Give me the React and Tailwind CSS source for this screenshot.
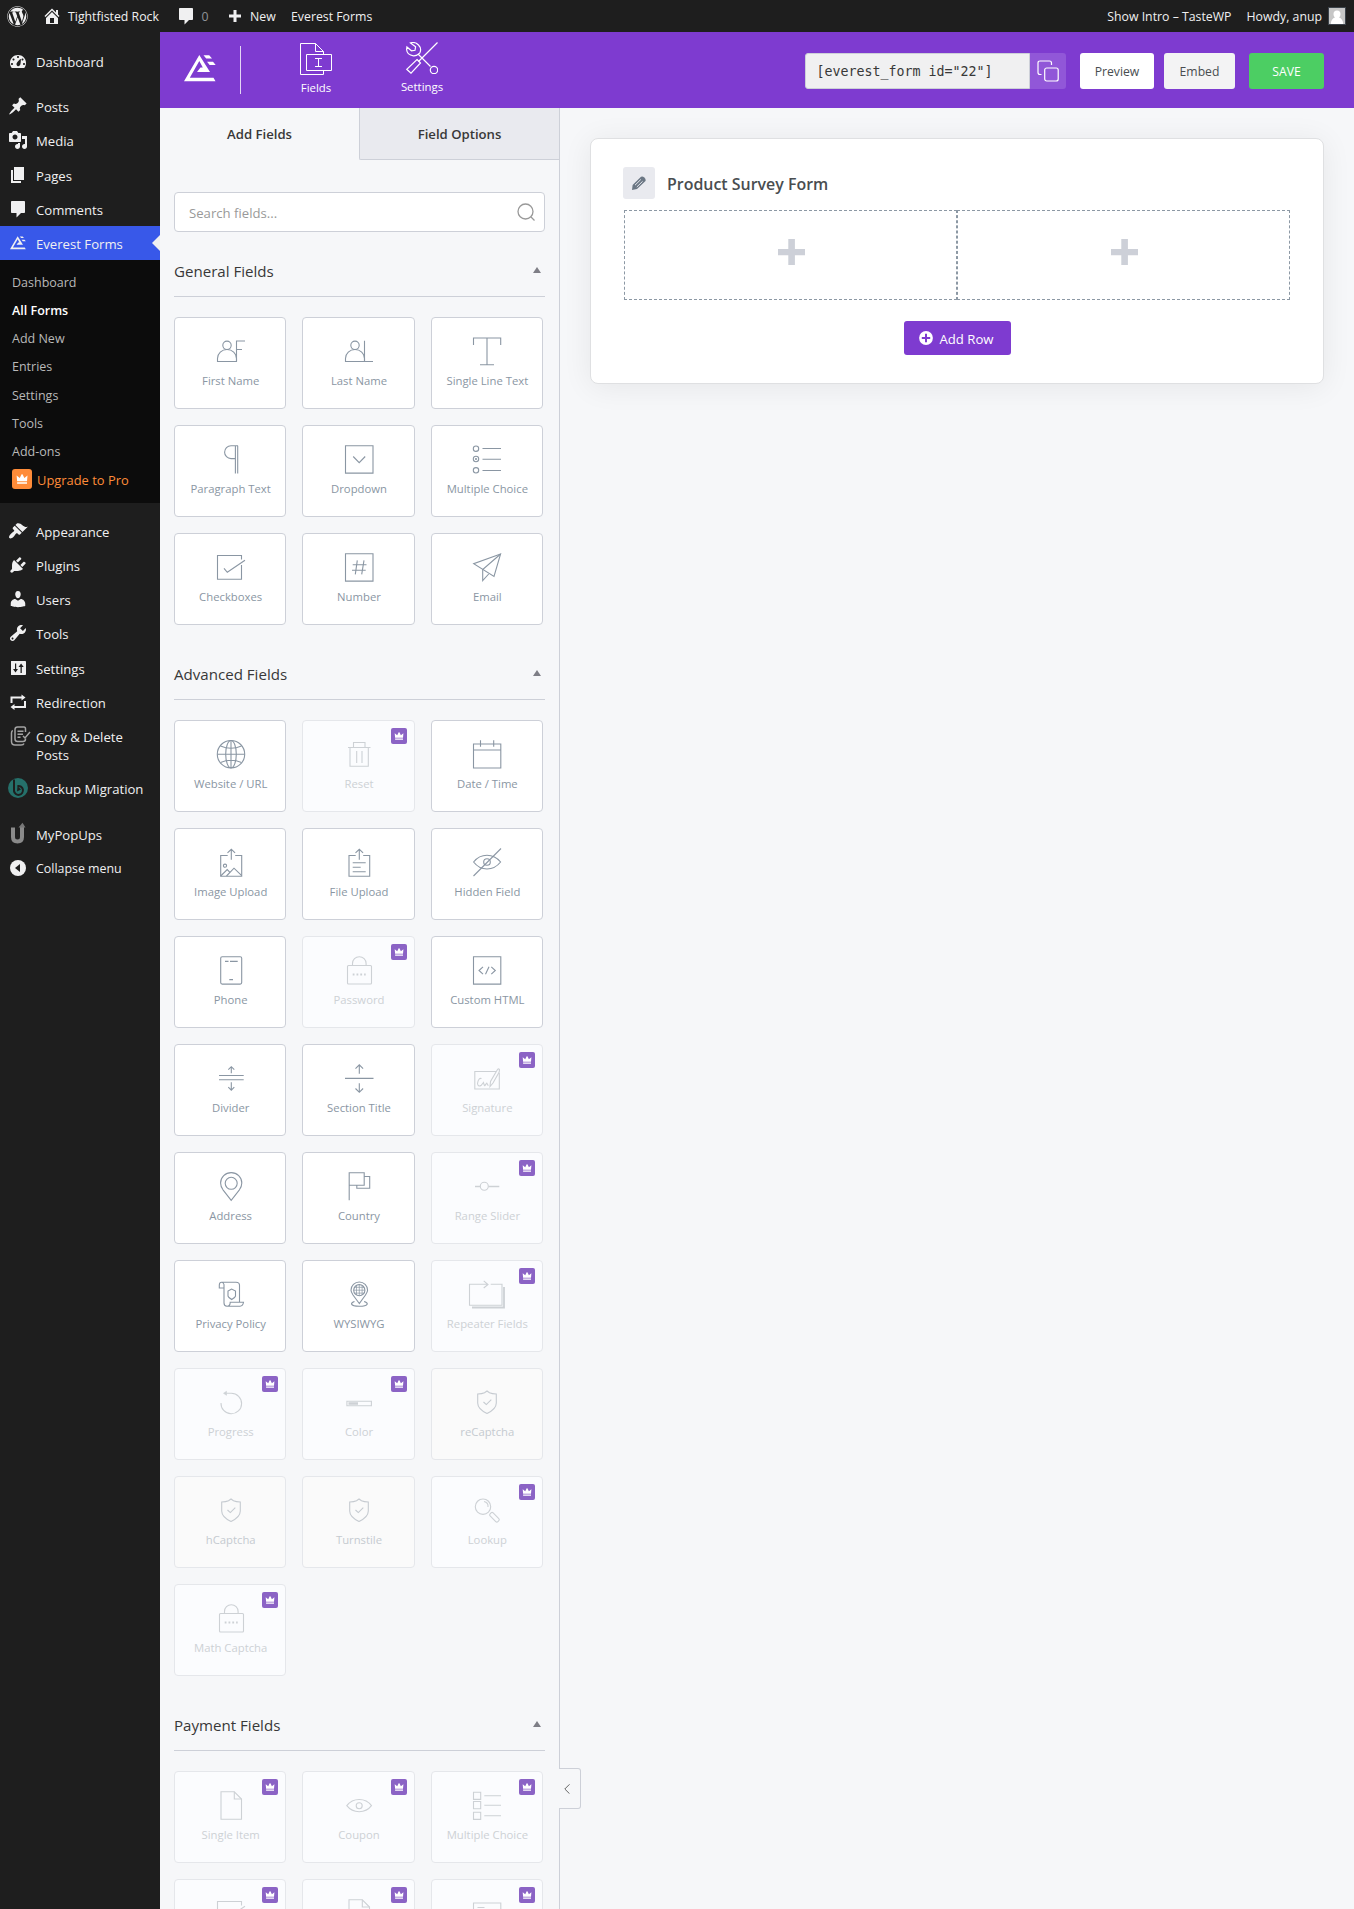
import React from "react";
import { FaWordpress } from "react-icons/fa";

/* ---------- WordPress menu glyphs (20 x 20) ---------- */

const GLYPHS = {
  dashboard:
    "M3.76 17h12.48c1.34-1.63 1.76-3.31 1.76-5.06 0-4.42-3.58-7.94-8-7.94s-8 3.52-8 7.94c0 1.75.42 3.43 1.76 5.06zM9 6c0-.55.45-1 1-1s1 .45 1 1-.45 1-1 1-1-.45-1-1zM4.5 8.5c0-.55.45-1 1-1s1 .45 1 1-.45 1-1 1-1-.45-1-1zM12.300 8l.6 .3c-.1 1.900-.2 4.600-.8 5.800-.6 1-1.700 1.300-2.700.8-1-.6-1.200-1.800-.6-2.800.7-1.200 2.200-2.900 3.500-4.100zM13.500 8.500c0-.55.45-1 1-1s1 .45 1 1-.45 1-1 1-1-.45-1-1zM3 13c0-.55.45-1 1-1s1 .45 1 1-.45 1-1 1-1-.45-1-1zm12 0c0-.55.45-1 1-1s1 .45 1 1-.45 1-1 1-1-.45-1-1z",
  post: "M10.44 3.02l1.82-1.82 6.36 6.35-1.83 1.82c-1.05-.68-2.48-.57-3.41.36l-.75.75c-.92.93-1.04 2.35-.35 3.41l-1.83 1.82-2.41-2.41-2.8 2.79c-.42.42-3.38 2.71-3.8 2.29s1.86-3.39 2.28-3.81l2.79-2.79L4.1 9.36l1.83-1.82c1.05.69 2.48.57 3.4-.36l.75-.75c.93-.92 1.05-2.35.36-3.41z",
  media:
    "M13 11V4c0-.55-.45-1-1-1h-1.67L9 1H5L3.67 3H2c-.55 0-1 .45-1 1v7c0 .55.45 1 1 1h10c.55 0 1-.45 1-1zM7 4.5c1.38 0 2.5 1.12 2.5 2.5S8.38 9.5 7 9.5 4.5 8.38 4.5 7 5.62 4.5 7 4.5zM14 6h5v10.5c0 1.38-1.12 2.5-2.5 2.5S14 17.88 14 16.5s1.12-2.5 2.5-2.5c.17 0 .34.02.5.05V9h-3V6zm-4 8.05V13h2v3.5c0 1.38-1.12 2.5-2.5 2.5S7 17.88 7 16.5 8.12 14 9.5 14c.17 0 .34.02.5.05z",
  page: "M6 15V2h10v13H6zm-1 1h8v2H3V5h2v11z",
  comments:
    "M4 2h12c.55 0 1 .45 1 1v10c0 .55-.45 1-1 1h-3l-4.500 4.500V14H4c-.55 0-1-.45-1-1V3c0-.55.45-1 1-1z",
  appearance:
    "M14.48 11.06L7.41 3.99l1.5-1.5c.5-.56 2.3-.47 3.51.32 1.21.8 1.43 1.28 2.91 2.1 1.18.64 2.45 1.26 4.45.85zm-.71.71L6.7 4.7 4.93 6.47c-.39.39-.39 1.02 0 1.41l1.06 1.06c.39.39.39 1.03 0 1.42-.6.6-1.43 1.11-2.21 1.69-.35.26-.7.53-1.01.84C1.43 14.23.4 16.08 1.4 17.07c.99 1 2.84-.03 4.18-1.36.31-.31.58-.66.85-1.02.57-.78 1.08-1.61 1.69-2.21.39-.39 1.02-.39 1.41 0l1.06 1.06c.39.39 1.02.39 1.41 0z",
  plugins:
    "M13.11 4.36L9.87 7.6 8 5.73l3.24-3.24c.35-.34 1.05-.2 1.56.32.52.51.66 1.21.31 1.55zm-8 1.77l.91-1.12 9.01 9.01-1.19.84c-.71.71-2.63 1.16-3.82 1.16H6.14L4.9 17.26c-.59.59-1.54.59-2.12 0-.59-.58-.59-1.53 0-2.12l1.24-1.24v-3.88c0-1.13.4-3.19 1.09-3.89zm7.26 3.97l3.24-3.24c.34-.35 1.04-.21 1.55.31.52.51.66 1.21.31 1.55l-3.24 3.25z",
  users:
    "M10 9.25c-2.27 0-2.73-3.44-2.73-3.44C7 4.02 7.82 2 9.97 2c2.16 0 2.98 2.02 2.71 3.81 0 0-.41 3.44-2.68 3.44zm0 2.57L12.72 10c2.39 0 4.52 2.33 4.52 4.53v2.49s-3.65 1.13-7.24 1.13c-3.65 0-7.24-1.13-7.24-1.13v-2.49c0-2.25 1.94-4.48 4.47-4.48z",
  tools:
    "M16.68 9.77c-1.34 1.34-3.3 1.67-4.95.99l-5.41 6.52c-.99.99-2.59.99-3.58 0s-.99-2.59 0-3.57l6.52-5.42c-.68-1.65-.35-3.61.99-4.95 1.28-1.28 3.12-1.62 4.72-1.06l-2.89 2.89 2.82 2.82 2.86-2.87c.53 1.58.18 3.39-1.08 4.65zM3.81 16.21c.4.39 1.04.39 1.43 0 .4-.4.4-1.04 0-1.43-.39-.4-1.03-.4-1.43 0-.39.39-.39 1.03 0 1.43z",
  settings:
    "M18 16V4c0-.55-.45-1-1-1H3.500c-.55 0-.5.45-.5 1v12c0 .55-.05 1 .5 1h13.500c.55 0 1-.45 1-1zM8.200 11h1.800l-2.500 3.500L5 11h2V5.500h1.200V11zm5.600-2v6h-1.300V9h-2l2.600-3.500L15.700 9z",
  home: "M16 8.5l1.53 1.53-1.06 1.06L10 4.6l-6.47 6.5-1.06-1.07L10 2.47l4 3.99V4h2v4.500zm-6-2.46l6 5.99V18H4v-5.97zM12 17v-5H8v5h4z",
};

function Glyph({ name, className }) {
  return (
    <svg viewBox="0 0 20 20" className={className} fill="currentColor" fillRule="evenodd">
      <path d={GLYPHS[name]} />
    </svg>
  );
}

function EverestMark({ className }) {
  return (
    <svg viewBox="0 0 32 27" className={className} fill="currentColor">
      <path d="M15.300 0L26 17H13l3.500-4.600h2.300L15.300 6 5.800 22.700h23.700l2 3.500H0z" />
      <path d="M19.500.3h5.700L28 3.500h-5.800zM23 6.800h6l2.700 3.200h-6z" />
    </svg>
  );
}

function RedirectIcon() {
  return (
    <svg viewBox="0 0 20 20" className="size-5" fill="none" stroke="currentColor" strokeWidth="2">
      <path d="M3.500 11V5.500H14M17 9v6H6" />
      <path d="M13.500 2.500l4 3-4 3zM6.500 12l-4 3 4 3z" fill="currentColor" stroke="none" />
    </svg>
  );
}

function CopyDeleteIcon() {
  return (
    <svg viewBox="0 0 22 20" className="ml-[6px] h-5 w-[22px] shrink-0" fill="none" stroke="#a3a3a3" strokeWidth="1.500">
      <path d="M15.500 12.500V13q0 2.500-2.500 2.500H7.500Q5 15.500 5 13V3.500Q5 1 7.500 1H14q1.500 0 1.500 2v3" />
      <path d="M2.800 4.500Q1.500 5 1.500 7v8.500Q1.500 19 5 19h6q2.500 0 3-1.500M7.500 5.200h6M7.500 8.200h5.500M7.500 11.200h3M13 10l2 2 5-6" />
    </svg>
  );
}

function BackupIcon() {
  return (
    <svg viewBox="0 0 20 20" className="size-5">
      <circle cx="10" cy="10" r="10" fill="#25706a" />
      <path d="M6 1.500v11.500a4.500 4.500 0 1 0 3.500-5" fill="none" stroke="#1e1e1e" strokeWidth="2" />
      <path d="M9.500 8L9 13.500l4-2z" fill="#1e1e1e" />
    </svg>
  );
}

function PopUpsIcon() {
  return (
    <svg viewBox="0 0 20 20" className="size-5 overflow-visible" fill="none" stroke="#8a8a8a" strokeWidth="4">
      <path d="M5 3.500v9.500q0 4.500 4.500 4.500t4.500-4.500V3" />
      <path d="M10.500 3.500L14.500-1.200 17.500 3.500z" fill="#777" stroke="none" />
    </svg>
  );
}

function CollapseIcon() {
  return (
    <svg viewBox="0 0 20 20" className="size-5">
      <circle cx="10" cy="10" r="8" fill="#f0f0f1" />
      <path d="M12 6v8L7 10z" fill="#1e1e1e" />
    </svg>
  );
}

function Crown({ className }) {
  return (
    <svg viewBox="0 0 16 16" className={className} fill="#fff">
      <path d="M3.700 5.200l2.500 2 1.500-3h.7l1.500 3 2.500-2-.4 4.600H4.100zM4.100 10.500h7.900v1.200H4.100z" />
    </svg>
  );
}

/* ---------- Admin bar ---------- */

function AdminBar() {
  return (
    <header className="flex h-8 shrink-0 items-center bg-[#1e1e1e] text-[12.300px] text-[#f0f0f1]">
      <FaWordpress className="ml-[6.500px] size-[21px] shrink-0" />
      <Glyph name="home" className="ml-[14.500px] size-5 shrink-0" />
      <span className="mt-[3px] ml-[6px] w-[94px] whitespace-nowrap">Tightfisted Rock</span>
      <Glyph name="comments" className="ml-[13.500px] size-5 shrink-0" />
      <span className="mt-[3px] ml-[6px] w-[10px] text-[#8f9297]">0</span>
      <svg viewBox="0 0 14 14" className="ml-[16px] size-[14px] shrink-0" fill="currentColor">
        <path d="M5.500 1h3v4.500H13v3H8.500V13h-3V8.500H1v-3h4.500z" />
      </svg>
      <span className="mt-[3px] ml-[8.500px] w-[27px]">New</span>
      <span className="mt-[3px] ml-[14px] whitespace-nowrap">Everest Forms</span>
      <span className="mt-[3px] ml-auto whitespace-nowrap">Show Intro – TasteWP</span>
      <span className="mt-[3px] ml-[15px] whitespace-nowrap">Howdy, anup</span>
      <svg viewBox="0 0 18 18" className="mr-2 ml-[6px] size-[18px] shrink-0">
        <path d="M0 0h18v18H0z" fill="#3c434a" />
        <path d="M1 1h16v16H1z" fill="#c6c6c6" />
        <path d="M9 3.500a3.500 3.500 0 0 1 3.500 3.500c0 1.800-.8 3-1.500 3.500 2.500.8 4 3 4.200 6.500H2.800c.2-3.500 1.700-5.700 4.200-6.500C6.300 10 5.500 8.800 5.500 7A3.500 3.500 0 0 1 9 3.500z" fill="#fff" />
      </svg>
    </header>
  );
}

/* ---------- Sidebar ---------- */

function MenuItem({ icon, children, active, small }) {
  return (
    <div className={`relative flex ${active ? "bg-[#3858e9]" : ""}`}>
      <div className="flex w-9 shrink-0 justify-center pt-[7px]">{icon}</div>
      <div className={`pt-[9px] pb-[7px] leading-[18.200px] whitespace-nowrap ${small ? "text-[12.400px]" : ""}`}>
        {children}
      </div>
      {active && (
        <div className="absolute top-[9px] right-0 border-y-8 border-r-8 border-y-transparent border-r-[#f0f0f1]" />
      )}
    </div>
  );
}

const glyph = (name) => <Glyph name={name} className="size-5" />;
const SUBMENU = ["Dashboard", "All Forms", "Add New", "Entries", "Settings", "Tools", "Add-ons"];

function Sidebar() {
  return (
    <nav className="w-40 shrink-0 bg-[#1e1e1e] pt-3 text-[13.150px] text-[#f0f0f1]">
      <MenuItem icon={glyph("dashboard")}>Dashboard</MenuItem>
      <div className="h-[11px]" />
      <MenuItem icon={glyph("post")}>Posts</MenuItem>
      <MenuItem icon={glyph("media")}>Media</MenuItem>
      <MenuItem icon={glyph("page")}>Pages</MenuItem>
      <MenuItem icon={glyph("comments")}>Comments</MenuItem>
      <MenuItem active icon={<EverestMark className="mt-[3px] h-[14px] w-4" />}>
        Everest Forms
      </MenuItem>
      <div className="bg-[#0c0c0c] pt-[8.500px] pb-[8.500px] pl-3 text-[12.500px] text-[#b9b9b9]">
        {SUBMENU.map((t) => (
          <div key={t} className={`leading-[28.200px] ${t === "All Forms" ? "font-semibold text-white" : ""}`}>
            {t}
          </div>
        ))}
        <div className="flex items-center text-[12.900px] leading-[28.200px] font-medium text-[#ff8c39]">
          <span className="-mt-0.5 mr-[5px] flex size-5 items-center justify-center rounded-[3px] bg-[#ff8c39]">
            <Crown className="size-5" />
          </span>
          Upgrade to Pro
        </div>
      </div>
      <div className="h-[11px]" />
      <MenuItem icon={glyph("appearance")}>Appearance</MenuItem>
      <MenuItem icon={glyph("plugins")}>Plugins</MenuItem>
      <MenuItem icon={glyph("users")}>Users</MenuItem>
      <MenuItem icon={glyph("tools")}>Tools</MenuItem>
      <MenuItem icon={glyph("settings")}>Settings</MenuItem>
      <MenuItem icon={<RedirectIcon />}>Redirection</MenuItem>
      <MenuItem icon={<CopyDeleteIcon />}>
        Copy &amp; Delete
        <br />
        Posts
      </MenuItem>
      <MenuItem icon={<BackupIcon />}>Backup Migration</MenuItem>
      <div className="h-[11px]" />
      <MenuItem icon={<PopUpsIcon />}>MyPopUps</MenuItem>
      <MenuItem small icon={<CollapseIcon />}>
        Collapse menu
      </MenuItem>
    </nav>
  );
}

/* ---------- Builder header ---------- */

function BuilderHeader() {
  return (
    <div className="flex h-[76px] shrink-0 bg-[#7e3bd0] text-white">
      <EverestMark className="mt-[22.500px] ml-6 h-[27px] w-8" />
      <div className="mt-[14px] ml-6 h-12 w-px bg-[#e3d6f5]" />
      <div className="mt-[11px] ml-[46px] flex w-[58px] flex-col items-center text-[11.400px]">
        <svg viewBox="0 0 32 32" className="size-8" fill="none" stroke="#fff">
          <path d="M23.500 11.500V8.500L15.500.5H.5v31h23v-3.500M15.500.5v8h8" />
          <path d="M6.500 11.500h25v16h-25zM15 15.500h7M15 23.500h7M18.500 15.500v8" />
        </svg>
        <span className="mt-1 leading-[18px]">Fields</span>
      </div>
      <div className="mt-[10px] ml-[48px] flex w-[58px] flex-col items-center text-[11.400px]">
        <svg viewBox="0 0 32 32" className="size-8" fill="none" stroke="#fff" strokeWidth="1.200">
          <path d="M31.500.5L12.500 19.500M12 12l12.500 12.500" />
          <circle cx="28" cy="28" r="3.700" />
          <path d="M4.500.9Q9-.5 12.500 3t1.200 8.200Q11 14 7.500 13.800 1 13 .6 7.500L.9 5l4.600 3.800L9 8.300l.6-3.500z" />
          <path d="M11 17.500l3.500 3.500L5 31.200.8 27.300z" />
        </svg>
        <span className="mt-1 leading-[18px]">Settings</span>
      </div>
      <div className="mt-[21px] ml-auto flex h-9 text-[12.200px]">
        <div className="flex w-[225px] items-center rounded-l-[3px] border border-[#cdd0d8] bg-[#f0f0f1] pt-[2px] pl-[10.500px] font-['DejaVu_Sans_Mono',monospace] text-[13.300px] text-[#383838]">
          [everest_form id="22"]
        </div>
        <div className="flex w-9 items-center justify-center rounded-r-[3px] bg-[#9157d8]">
          <svg viewBox="0 0 22 22" className="size-[22px]" fill="none" stroke="#fff" strokeWidth="1.200">
            <rect x="7.700" y="8" width="13.500" height="13" rx="2" />
            <path d="M4.500 14.500H3q-2 0-2-2V3q0-2 2-2h9.500q2 0 2 2v2" />
          </svg>
        </div>
        <button className="ml-[14px] w-[74px] rounded-[3px] bg-white pt-[3px] text-[#494d50]">Preview</button>
        <button className="ml-[10px] w-[71px] rounded-[3px] bg-[#f3f3f4] pt-[3px] text-[#494d50]">Embed</button>
        <button className="mr-[30px] ml-[14px] w-[75px] rounded-[3px] bg-[#4cce63] pt-[3px]">SAVE</button>
      </div>
    </div>
  );
}

/* ---------- Field icons: 28 px wide line drawings ---------- */

const person = (
  <>
    <circle cx="10" cy="8.300" r="4.200" />
    <path d="M.5 24.500v-3a9.500 9 0 0 1 19 0v3z" />
  </>
);
const lock = (
  <>
    <rect x="2.500" y="9.500" width="24" height="18.500" rx="1" />
    <path d="M7.500 9.500V7.500a6.800 6.800 0 0 1 13.600 0v2" />
    <path d="M7.700 18.500h13" strokeWidth="1.800" strokeDasharray="1.800 2" />
  </>
);
const shield = (
  <>
    <path d="M14 3l-2.500 1.700Q9 5.800 4.700 6v9q0 6 9.300 10.500 9.300-4.500 9.300-10.500V6Q19 5.800 16.500 4.700z" />
    <path d="M10.500 14l2.800 2.600 5-5" />
  </>
);
const checkbox = (
  <>
    <path d="M24.500 6.500v-4H.5v23.700h24V12" />
    <path d="M7 15.300l3.300 4L28 7.200" />
  </>
);

const ICONS = {
  first: <>{person}<path d="M19.500 24V4H28M19.500 12.500h5.500" /></>,
  last: <>{person}<path d="M19.500 3.700v20.800H28" /></>,
  text: <path d="M.5 8V1h27.200v7M14 1v26.700M7 27.700h14" />,
  paragraph: <path d="M21 .8h-7a6.400 6.400 0 0 0 0 12.800h4.300M18.400 1v27.500M20.700.8v27.700" />,
  dropdown: <><path d="M.5.8h27.500v27.300H.5z" /><path d="M8.200 11.500l6 6.200 6-6.200" /></>,
  radio: (
    <>
      <circle cx="3" cy="3.700" r="2.700" /><circle cx="3" cy="14" r="2.700" /><circle cx="3" cy="25.300" r="2.700" />
      <circle cx="3" cy="14" r=".5" />
      <path d="M9.500 3.500H28M9.500 14.200H28M9.500 25.500H28" />
    </>
  ),
  checkbox,
  number: <><path d="M.5.8h27.500v27.300H.5z" /><path d="M12.300 7.300l-2 14M19 7.300l-2.300 14M7.700 11.700h13.800M7 17.200h13.700" /></>,
  email: <><path d="M27.600 1L.7 10.700 21 23.500z" /><path d="M27.600 1L9.700 16.500v11l6-6.500" /></>,
  globe: (
    <>
      <circle cx="14" cy="14.200" r="13.700" />
      <ellipse cx="14" cy="14.200" rx="5.300" ry="13.700" />
      <path d="M14 .5V28M.3 14.200h27.500M3.500 6Q14 10.500 24.500 6M3.500 22.500Q14 18 24.500 22.500" />
    </>
  ),
  trash: <path d="M3 7.500h22.500M8.500 7.500V2.500h11.500v5M5 7.500v18.800h18.300V7.500M11.700 11v12M17 11v12" />,
  calendar: <path d="M.5 4h27.300v24H.5zM.5 10h27.300M7.500.3v6.500M20.700.3v6.500" />,
  image: (
    <>
      <path d="M10.700 7.500h-7v20.700h21V7.500h-6.500M14.300 11.700V1.500M10.500 4.800l3.800-3.500 3.800 3.500" />
      <circle cx="8" cy="17.700" r="1.600" />
      <path d="M3.700 28l6.500-6.500 3 3.200M9.500 28l7.500-7.800 7.700 7.500" />
    </>
  ),
  file: <path d="M10.700 7.500H4v20.700h20.700V7.500h-6.500M14.300 11.700V1.500M10.500 4.800l3.800-3.500 3.800 3.500M7.700 14.700h13M7.700 19.300h8M7.700 23.700h13" />,
  hidden: (
    <>
      <path d="M.6 14Q6 7.300 14 7.300T27.600 14Q22 21 14 21T.6 14z" />
      <circle cx="14" cy="14" r="3.300" />
      <path d="M28 .5L.5 28" />
    </>
  ),
  phone: <><rect x="3.700" y=".8" width="21" height="27.300" rx="1.500" /><path d="M8 5.400h3.500M13 5.400h7.700M12.300 23.600H16" /></>,
  lock,
  html: <><path d="M.5.8h27.300v27.300H.5z" /><path d="M10 10.800l-4 3.700 4 3.700M16 10.800l-3.500 7.400M18.300 10.800l4 3.700-4 3.700" /></>,
  divider: <path d="M2 11.500h24.700M2 15.700h24.700M14.300 9.300V3M11.300 5.700l3-3 3 3M14.300 18.300V26M11.300 23.200l3 3 3-3" />,
  section: <path d="M0 14.400h28.500M14.300 9.700V1M10.500 4.600l3.800-3.800 3.800 3.800M14.300 19.300V28M10.500 24.500l3.800 3.800 3.800-3.800" />,
  signature: (
    <>
      <path d="M23 7.500H1.800V25h24.500V9" />
      <path d="M17 22.500l.5-5 7-12q1-1.200 2 0l-.3 2.500L20 19z" />
      <path d="M8.500 14.500q-3-1-4 5 .5 3.500 3.500 2l2.500-3q1 5 2 2l1.300-1.300 1.500 2.500" />
    </>
  ),
  pin: <><path d="M14.200 28.300L6 17.800Q3.600 14.500 3.600 11a10.600 10.400 0 0 1 21.200 0q0 3.500-2.400 6.800z" /><circle cx="14.200" cy="11.300" r="6" /></>,
  flag: <path d="M4.200 28.300V.8h15v12.400h-15M19.200 4.500h5.500v11.700H11.800v-3" />,
  slider: <><path d="M2 14.500h5.300M15.500 14.500h10.800" strokeWidth="1.500" /><circle cx="11.300" cy="14.300" r="4" /></>,
  privacy: (
    <>
      <path d="M7 23V4.500Q6.500 2.300 4.500 2.300T2.300 5v3H7M4.500 2.300H19q3.500 0 3.500 3v17M7 23q0 3 3 3.300h13q3-.3 3.500-4H13.200q0 4-3.200 4" />
      <path d="M14.700 9l-3.700 2v5l1 1.500 2.700 2 2.800-2 1-1.500v-5z" />
    </>
  ),
  wysiwyg: (
    <>
      <path d="M14.300 23.500L8 15Q6 12 6 10.300a8.300 8.300 0 0 1 16.600 0Q22.600 12 20.500 15zM9.500 21.500q-3 1-3 2.500 1 2.300 7.800 2.300t8-2.300q0-1.500-3.200-2.500" />
      <circle cx="14.300" cy="10.200" r="5.600" />
      <path d="M14.300 4.600v11.200M8.700 10.200h11.200M11.500 5.500v9.400M17.100 5.500v9.400M9.700 7.300h9.300M9.700 13.100h9.300" strokeWidth=".7" />
    </>
  ),
  repeater: (
    <>
      <path d="M15 4.300H-3.500v21H29V4.300H17.700M10.700.8l4.300 3.700L10.700 8" />
      <path d="M31 7v20.500H-1" strokeWidth="1.800" />
    </>
  ),
  progress: <><path d="M4 15a10.300 10.300 0 1 0 10.300-9.800h-5" /><path d="M6.500 5.300l3-2v4z" fill="currentColor" strokeWidth=".6" /></>,
  color: <><path d="M1.900 13.300h24.500v4.400H1.900z" /><path d="M3.500 15.500h9.500" strokeWidth="2.500" /></>,
  shield,
  lookup: (
    <>
      <circle cx="10" cy="10.700" r="7.700" />
      <path d="M11 5.500q4.500 1 4 5.500" />
      <rect x="16" y="18.700" width="11" height="4.300" rx="1.500" transform="rotate(45 21 21)" />
    </>
  ),
  doc: <><path d="M17.300.8H4v27.500h20.500V8z" /><path d="M17.300.8V8h7.200" /></>,
  eye: <><path d="M1.800 14.700Q6.500 8.500 14.200 8.500t12.300 6.200q-4.600 6-12.300 6T1.800 14.700z" /><circle cx="14.200" cy="14.700" r="3" /></>,
  choices: <path d="M.5 1.200h7.200v7.200H.5zM.5 10.500h7.200v7.200H.5zM.5 21.200h7.200v7.200H.5zM11.300 4.700H28M11.300 14.200H28M11.300 24.700H28" />,
  card: <path d="M.5 4h27.300v20H.5zM4.500 8.500h7" />,
};

function FieldCard({ icon, label, tone }) {
  const tones = {
    normal: "border-[#cdd0d8] bg-white text-[#8a96a3]",
    pro: "border-[#e5e7eb] bg-[#fbfcfe] text-[#cdd1d5]",
    muted: "border-[#e5e7eb] bg-[#fafafa] text-[#c5cad0]",
  };
  return (
    <div className={`relative flex h-[92px] flex-col items-center rounded-[4px] border pl-px ${tones[tone || "normal"]}`}>
      <svg
        viewBox="0 0 28 30"
        className="mt-[19px] h-[30px] w-7 shrink-0 overflow-visible"
        fill="none"
        stroke="currentColor"
        strokeWidth="1.100"
      >
        {ICONS[icon]}
      </svg>
      {label && <div className="mt-[5px] text-[11.300px] leading-[18px] whitespace-nowrap">{label}</div>}
      {tone === "pro" && (
        <span className="absolute top-[7px] right-[7px] size-4 rounded-[2px] bg-[#8b63c5]">
          <Crown className="size-4" />
        </span>
      )}
    </div>
  );
}

function Section({ title, fields, first }) {
  return (
    <section>
      <div
        className={`flex h-[51px] items-center justify-between border-b border-[#cdd0d8] pr-1 text-[15.100px] text-[#383838] ${
          first ? "mt-[14px]" : "mt-6"
        }`}
      >
        {title}
        <svg viewBox="0 0 8 6" className="-mt-0.5 h-[6px] w-2" fill="#7e7e86">
          <path d="M4 0l4 6H0z" />
        </svg>
      </div>
      <div className="mt-5 grid w-[369px] grid-cols-3 gap-4">
        {fields.map(([icon, label, tone], i) => (
          <FieldCard key={i} icon={icon} label={label} tone={tone} />
        ))}
      </div>
    </section>
  );
}

const GENERAL = [
  ["first", "First Name"], ["last", "Last Name"], ["text", "Single Line Text"],
  ["paragraph", "Paragraph Text"], ["dropdown", "Dropdown"], ["radio", "Multiple Choice"],
  ["checkbox", "Checkboxes"], ["number", "Number"], ["email", "Email"],
];
const ADVANCED = [
  ["globe", "Website / URL"], ["trash", "Reset", "pro"], ["calendar", "Date / Time"],
  ["image", "Image Upload"], ["file", "File Upload"], ["hidden", "Hidden Field"],
  ["phone", "Phone"], ["lock", "Password", "pro"], ["html", "Custom HTML"],
  ["divider", "Divider"], ["section", "Section Title"], ["signature", "Signature", "pro"],
  ["pin", "Address"], ["flag", "Country"], ["slider", "Range Slider", "pro"],
  ["privacy", "Privacy Policy"], ["wysiwyg", "WYSIWYG"], ["repeater", "Repeater Fields", "pro"],
  ["progress", "Progress", "pro"], ["color", "Color", "pro"], ["shield", "reCaptcha", "muted"],
  ["shield", "hCaptcha", "muted"], ["shield", "Turnstile", "muted"], ["lookup", "Lookup", "pro"],
  ["lock", "Math Captcha", "pro"],
];
const PAYMENT = [
  ["doc", "Single Item", "pro"], ["eye", "Coupon", "pro"], ["choices", "Multiple Choice", "pro"],
  ["checkbox", "", "pro"], ["doc", "", "pro"], ["card", "", "pro"],
];

function FieldsPanel() {
  return (
    <aside className="relative w-[400px] shrink-0 border-r border-[#cdd0d8] bg-[#f6f7f9]">
      <div className="flex h-[52px] text-[13.150px] font-semibold text-[#383838]">
        <div className="flex w-[199px] items-center justify-center pt-px">Add Fields</div>
        <div className="flex flex-1 items-center justify-center rounded-bl-[2px] border-b border-l border-[#cdd0d8] bg-[#e9eaef] pt-[2px]">
          Field Options
        </div>
      </div>
      <div className="pr-[14px] pl-[14px]">
        <div className="mt-8 flex h-10 items-center justify-between rounded-[4px] border border-[#cdd0d8] bg-white pr-[9px] pl-[14px] text-[13.150px] text-[#999]">
          <span className="pt-[3px]">Search fields...</span>
          <svg viewBox="0 0 18 18" className="size-[18px]" fill="none" stroke="#999" strokeWidth="1.300">
            <circle cx="8.500" cy="8.500" r="7.500" />
            <path d="M14 14l3.500 3.500" />
          </svg>
        </div>
        <Section first title="General Fields" fields={GENERAL} />
        <Section title="Advanced Fields" fields={ADVANCED} />
        <Section title="Payment Fields" fields={PAYMENT} />
      </div>
      <div className="absolute top-[1660px] -right-[22px] flex h-[41px] w-[22px] items-center justify-center rounded-r-[3px] border border-l-0 border-[#cdd0d8] bg-[#f6f7f9]">
        <svg viewBox="0 0 6 10" className="-ml-[5px] h-[10px] w-[6px]" fill="none" stroke="#666">
          <path d="M5.500.3L.8 5l4.700 4.700" />
        </svg>
      </div>
    </aside>
  );
}

/* ---------- Canvas ---------- */

function DropCell() {
  return (
    <div className="flex h-[90px] flex-1 justify-center border border-dashed border-[#8c98a4] pt-[28px] pl-0.5">
      <svg viewBox="0 0 27 26" className="h-[26px] w-[27px]" fill="#cdd0d8">
        <path d="M10.300 0h6.600v10H27v6.300H16.900V26h-6.600v-9.700H0V10h10.300z" />
      </svg>
    </div>
  );
}

function Canvas() {
  return (
    <main className="flex-1 bg-[#f6f7f9] pt-[30px] pr-[30px] pl-[30px]">
      <div className="h-[246px] rounded-[8px] border border-[#dfe0e2] bg-white px-8 pt-7 shadow-[0_3px_30px_rgba(0,0,0,0.07)]">
        <div className="flex h-8 items-center">
          <div className="flex size-8 items-center justify-center rounded-[3px] bg-[#e9eaef]">
            <svg viewBox="0 0 14 14" className="size-[14px]">
              <path d="M0 14l.6-5L9 .8Q10.500-.2 12.300 1.500T13.500 5L5 13z" fill="#6b7784" />
              <path d="M3 9.200L8.800 3.500M4.800 11l5.800-5.700" stroke="#e9eaef" strokeWidth="1" />
            </svg>
          </div>
          <h1 className="mt-0.5 ml-3 text-[15.950px] leading-8 font-semibold text-[#494d50]">Product Survey Form</h1>
        </div>
        <div className="mt-[11px] ml-px flex w-[666px]">
          <DropCell />
          <DropCell />
        </div>
        <button className="mx-auto mt-[21px] flex h-[34px] w-[107px] items-center rounded-[3px] bg-[#7e3bd0] pl-[15px] text-[13.150px] text-white">
          <svg viewBox="0 0 14 14" className="size-[14px]">
            <circle cx="7" cy="7" r="6.900" fill="#fff" />
            <path d="M7 2.800v8.400M2.800 7h8.400" stroke="#7e3bd0" strokeWidth="2" />
          </svg>
          <span className="ml-[7px] pt-[3px] whitespace-nowrap">Add Row</span>
        </button>
      </div>
    </main>
  );
}

export default function App() {
  return (
    <div className="flex h-[1909px] w-[1354px] flex-col overflow-hidden bg-[#f6f7f9] font-['Open_Sans','Noto_Sans',sans-serif]">
      <AdminBar />
      <div className="flex min-h-0 flex-1">
        <Sidebar />
        <div className="flex min-w-0 flex-1 flex-col">
          <BuilderHeader />
          <div className="flex min-h-0 flex-1">
            <FieldsPanel />
            <Canvas />
          </div>
        </div>
      </div>
    </div>
  );
}
